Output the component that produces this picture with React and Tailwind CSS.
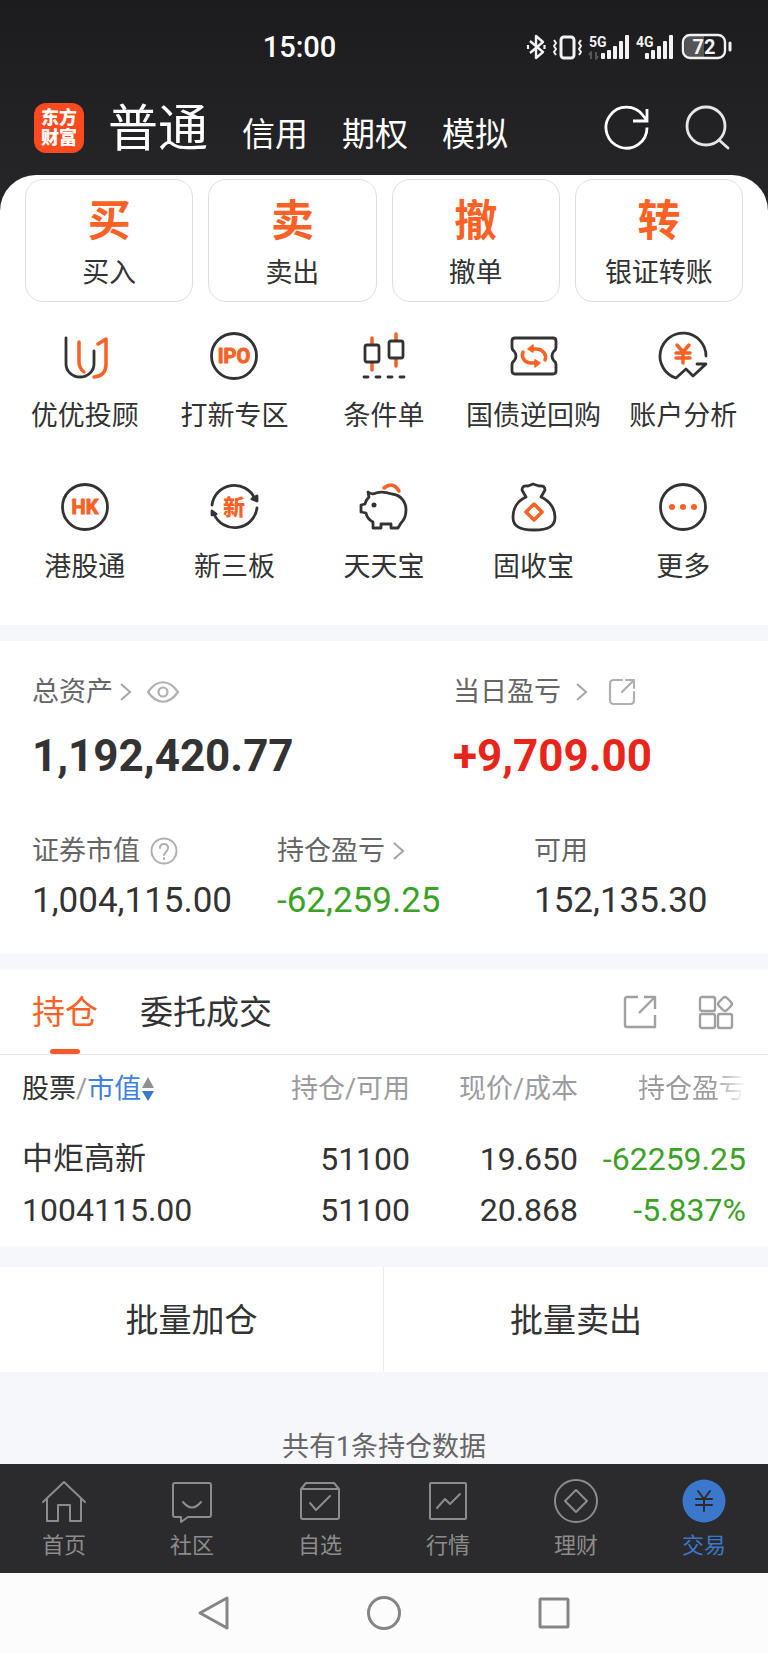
const INK = '#333333';
const ORANGE = '#f96125';

function Svg({ size, className = '', children, ...rest }) {
  return (
    <svg
      width={size}
      height={size}
      viewBox={`0 0 ${size} ${size}`}
      fill="none"
      strokeLinecap="round"
      strokeLinejoin="round"
      aria-hidden="true"
      className={`shrink-0 ${className}`}
      {...rest}
    >
      {children}
    </svg>
  );
}

function Chevron() {
  return (
    <svg width="12" height="20" viewBox="0 0 12 20" fill="none" stroke="#a5a5a5" strokeWidth="2" aria-hidden="true">
      <path d="M1 2l9 8-9 8" />
    </svg>
  );
}

function StatusIcons() {
  return (
    <svg width="208" height="28" viewBox="0 0 208 28" fill="none" stroke="#f2f2f2" strokeLinejoin="round" aria-hidden="true">
      <path d="M4 8l13 11-7 6V3l7 6L4 20" strokeWidth="2.4" />
      <path d="M2 12v4M18.500 12v4" strokeWidth="2.200" />
      <rect x="35" y="4" width="13" height="21" rx="3" strokeWidth="3" />
      <path d="M28 7l2 3-2 3 2 3-2 3 2 3M55 7l-2 3 2 3-2 3 2 3-2 3" strokeWidth="2" />
      <g stroke="none" fill="#f2f2f2" fontFamily="Roboto, sans-serif" fontWeight="700">
        <text x="63" y="14" fontSize="14">5G</text>
        <text x="110" y="14" fontSize="14">4G</text>
        <rect x="75" y="20" width="4" height="6" rx="1" />
        <rect x="81" y="17" width="4" height="9" rx="1" />
        <rect x="87" y="13" width="4" height="13" rx="1" />
        <rect x="93" y="8" width="4" height="18" rx="1" />
        <rect x="99" y="2" width="4" height="24" rx="1" />
        <rect x="119" y="20" width="4" height="6" rx="1" />
        <rect x="125" y="17" width="4" height="9" rx="1" />
        <rect x="131" y="13" width="4" height="13" rx="1" />
        <rect x="137" y="8" width="4" height="18" rx="1" />
        <rect x="143" y="2" width="4" height="24" rx="1" />
      </g>
      <path d="M65 26v-7l-2 3M70 19v7l2-3" stroke="#555" strokeWidth="2" />
      <path d="M163 3h15v21h-15q-4-1-4-6v-9q0-5 4-6z" fill="#555" stroke="none" />
      <rect x="157" y="2" width="42" height="23" rx="7" strokeWidth="2.400" />
      <path d="M204 10v7" strokeWidth="3" strokeLinecap="round" />
      <text x="178" y="21" textAnchor="middle" fontSize="20" fontWeight="700" fontFamily="Roboto, sans-serif" fill="#f2f2f2" stroke="none">
        72
      </text>
    </svg>
  );
}

const trades = [
  ['买', '买入'],
  ['卖', '卖出'],
  ['撤', '撤单'],
  ['转', '银证转账'],
];

const textProps = {
  textAnchor: 'middle',
  fill: ORANGE,
  stroke: 'none',
  fontWeight: 700,
  fontFamily: 'Roboto, "Noto Sans CJK SC", sans-serif',
};

const services = [
  {
    label: '优优投顾',
    icon: (
      <>
        <path d="M5 6v26a14 13 0 0 0 28 0V19" />
        <g stroke={ORANGE} strokeWidth="3.500">
          <path d="M18 10v20q0 6 5 10" />
          <path d="M37 12l8-5v25q0 12-12 13" />
        </g>
      </>
    ),
  },
  {
    label: '打新专区',
    icon: (
      <>
        <circle cx="24" cy="24" r="22.500" />
        <text x="24" y="31" fontSize="20" {...textProps} stroke={ORANGE} strokeWidth="1">IPO</text>
      </>
    ),
  },
  {
    label: '条件单',
    icon: (
      <>
        <path d="M12 6v6M12 31v7M36 2v6M36 27v7" stroke={ORANGE} strokeWidth="3.500" />
        <rect x="5" y="13" width="14" height="17" rx="2" />
        <rect x="29" y="9" width="14" height="17" rx="2" />
        <path d="M4 45h4M16 45h4M28 45h4M40 45h4" />
      </>
    ),
  },
  {
    label: '国债逆回购',
    icon: (
      <>
        <path d="M5 6h38q3 0 3 3v6q0 3-2 4-4 5 0 10 2 1 2 4v6q0 3-3 3H5q-3 0-3-3v-6q0-3 2-4 4-5 0-10-2-1-2-4V9q0-3 3-3z" />
        <g stroke={ORANGE} strokeWidth="3.500">
          <path d="M22 17h4c7 0 11 6 9 11" />
          <path d="M26 31h-4c-8 0-11-6-9-11" />
          <path d="M18 17l5-4v7zM30 31l-5-3v7z" fill={ORANGE} strokeWidth="1.500" />
        </g>
      </>
    ),
  },
  {
    label: '账户分析',
    icon: (
      <>
        <path d="M47 24A23 23 0 1 0 17 46l10-9 7 7 13-12h-9" />
        <path d="M18 13l6 7 6-7M17 21h14M17 26h14M24 21v10" stroke={ORANGE} strokeWidth="3.500" />
      </>
    ),
  },
  {
    label: '港股通',
    icon: (
      <>
        <circle cx="24" cy="24" r="22.500" />
        <text x="24" y="31" fontSize="20" {...textProps} stroke={ORANGE} strokeWidth="1">HK</text>
      </>
    ),
  },
  {
    label: '新三板',
    icon: (
      <>
        <path d="M2 22a22.500 22.500 0 0 1 43-6M47 25a22.500 22.500 0 0 1-43 6" />
        <path d="M42 16l5-3v5zM2 32v-4l4 3z" fill={INK} />
        <text x="24" y="32" fontSize="22" {...textProps} fontWeight="900">新</text>
      </>
    ),
  },
  {
    label: '天天宝',
    icon: (
      <>
        <path d="M8 9q4 3 8 1 6-2 16 1c9 1 14 8 14 16 0 5-2 10-5 13l-3 5h-7v-4H21v4h-8v-6q-6-3-7-9l-5-1v-7l4-1q1-4 4-7z" />
        <circle cx="14" cy="22" r="2.500" fill={INK} stroke="none" />
        <path d="M24 5q9-7 15 3" stroke={ORANGE} strokeWidth="3.500" />
      </>
    ),
  },
  {
    label: '固收宝',
    icon: (
      <>
        <path d="M16 14L12 7q0-5 6-4l5-2 6 2q6-1 6 4l-4 7c9 4 14 12 14 20 0 9-6 13-21 13S3 43 3 34c0-8 4-16 13-20z" />
        <path d="M24 21l8 8-8 8-8-8z" stroke={ORANGE} strokeWidth="3.500" />
      </>
    ),
  },
  {
    label: '更多',
    icon: (
      <>
        <circle cx="24" cy="24" r="22.500" />
        <g fill={ORANGE} stroke="none">
          <circle cx="13" cy="24" r="3" />
          <circle cx="24" cy="24" r="3" />
          <circle cx="35" cy="24" r="3" />
        </g>
      </>
    ),
  },
];

const navItems = [
  { label: '首页', icon: <path d="M1 23L22 3l21 20M5 20v22h11V26h12v16h11V20" /> },
  {
    label: '社区',
    icon: <path d="M5 4h34q2 0 2 2v30q0 2-2 2H18l-7 5v-5H5q-2 0-2-2V6q0-2 2-2zM13 23q9 11 18 0" />,
  },
  {
    label: '自选',
    icon: <path d="M3 10l5-6h28l5 6v28q0 2-2 2H5q-2 0-2-2zh38M12 24l6 7 14-14" />,
  },
  {
    label: '行情',
    icon: (
      <>
        <rect x="4" y="4" width="36" height="36" rx="1" />
        <path d="M11 29l8-9 5 5 10-10" />
      </>
    ),
  },
  {
    label: '理财',
    icon: (
      <>
        <circle cx="22" cy="22" r="21" />
        <path d="M22 11l11 11-11 11-11-11z" />
      </>
    ),
  },
  {
    label: '交易',
    active: true,
    icon: (
      <>
        <circle cx="22" cy="22" r="21.500" fill="#3b78cc" stroke="none" />
        <path d="M16 12l6 8 6-8M14 20h16M14 26h16M22 20v12" stroke="#2b2b2d" />
      </>
    ),
  },
];

function Header() {
  return (
    <header className="bg-gradient-to-b from-[#1c1c1e] to-[#252426] text-white">
      <div className="relative flex h-[94px] items-center justify-end pr-[34px]">
        <time className="absolute left-[39%] -translate-x-1/2 text-[29px] leading-9 font-medium">15:00</time>
        <StatusIcons />
      </div>
      <div className="flex h-[81px] items-start pr-[38px] pl-[34px]">
        <div className="mt-[9px] grid h-[50px] w-[50px] place-content-center rounded-xl bg-[#ff4a20] text-center text-[18px] leading-5 font-black">
          <span>东方</span>
          <span>财富</span>
        </div>
        <nav className="mt-[3px] ml-6 flex items-baseline gap-[34px] text-[33px]">
          <button className="text-[50px] leading-[64px]">普通</button>
          <button>信用</button>
          <button>期权</button>
          <button>模拟</button>
        </nav>
        <div className="mt-[10px] ml-auto flex gap-[34px]">
          <button aria-label="刷新">
            <Svg size={46} stroke="#fff" strokeWidth="2.800" strokeLinecap="butt">
              <path d="M43 23.500a20.500 20.500 0 1 1-4-12l4 5M43 5v12H29" strokeLinejoin="miter" />
            </Svg>
          </button>
          <button aria-label="搜索">
            <Svg size={46} stroke="#e6e6e6" strokeWidth="2.800">
              <circle cx="22" cy="22" r="19" />
              <path d="M35 36l9 8" />
            </Svg>
          </button>
        </div>
      </div>
    </header>
  );
}

function Assets() {
  return (
    <section className="bg-white pt-[33px] pb-[33px] pl-8 text-[27px] leading-9 text-[#666]">
      <div className="grid grid-cols-[421fr_315fr]">
        <div>
          <div className="flex items-center">
            <button className="flex items-center gap-[7px]">总资产 <Chevron /></button>
            <button className="ml-[15px]" aria-label="显示资产">
              <svg width="32" height="22" viewBox="0 0 32 22" fill="none" stroke="#b0b0b0" strokeWidth="2.200" aria-hidden="true">
                <path d="M1 11C10-2 22-2 31 11 22 24 10 24 1 11z" />
                <circle cx="16" cy="11" r="4.500" />
              </svg>
            </button>
          </div>
          <p className="mt-[22px] text-[44px] leading-[48px] font-bold text-[#333]">1,192,420.77</p>
        </div>
        <div>
          <div className="flex items-center">
            <button className="flex items-center gap-[15px]">当日盈亏 <Chevron /></button>
            <button className="ml-5" aria-label="分享盈亏">
              <Svg size={28} stroke="#b0b0b0" strokeWidth="2.200">
                <path d="M14 2H6q-4 0-4 4v16q0 4 4 4h16q4 0 4-4v-8M14 14L26 2M18 2h8v8" />
              </Svg>
            </button>
          </div>
          <p className="mt-[22px] text-[44px] leading-[48px] font-bold text-[#e8251b]">+9,709.00</p>
        </div>
      </div>
      <div className="mt-[53px] grid grid-cols-[245fr_257fr_234fr]">
        <div>
          <div className="flex items-center gap-[10px]">
            证券市值
            <button aria-label="市值说明">
              <Svg size={28} stroke="#b0b0b0" strokeWidth="2">
                <circle cx="14" cy="14" r="12.500" />
                <path d="M10 11q0-4 4-4t4 4q0 2-2 4t-2 3M14 21v1" />
              </Svg>
            </button>
          </div>
          <p className="mt-3 text-[35px] leading-10 text-[#333]">1,004,115.00</p>
        </div>
        <div>
          <button className="flex items-center gap-2">持仓盈亏 <Chevron /></button>
          <p className="mt-3 text-[35px] leading-10 text-[#3ba226]">-62,259.25</p>
        </div>
        <div>
          <div>可用</div>
          <p className="mt-3 text-[35px] leading-10 text-[#333]">152,135.30</p>
        </div>
      </div>
    </section>
  );
}

function Holdings() {
  return (
    <section className="bg-white text-[#333]">
      <div className="flex h-[85px] items-stretch border-b border-[#e8e8e8] pr-[34px] pl-8 text-[33px]">
        <button className="relative pt-[2px] text-[#f96125]">
          持仓
          <span className="absolute bottom-0 left-1/2 h-[5px] w-[30px] -translate-x-1/2 rounded-full bg-[#f55a2c]" />
        </button>
        <button className="ml-[42px] pt-[2px]">委托成交</button>
        <div className="ml-auto flex items-center gap-10">
          <button aria-label="分享持仓">
            <Svg size={36} stroke="#a0a0a3" strokeWidth="2.400" strokeLinecap="butt">
              <path d="M16 3H5q-2 0-2 2v26q0 2 2 2h28V21M17 19L32 4M22 3h11v12" />
            </Svg>
          </button>
          <button aria-label="视图切换">
            <Svg size={36} stroke="#a0a0a3" strokeWidth="2.400">
              <rect x="2" y="3" width="15" height="14" rx="2" />
              <rect x="2" y="20" width="15" height="14" rx="2" />
              <rect x="20" y="20" width="14" height="14" rx="2" />
              <path d="M25 4q2-2 4 0l4 4q2 2 0 4l-4 4q-2 2-4 0l-4-4q-2-2 0-4z" />
            </Svg>
          </button>
        </div>
      </div>
      <div className="px-[22px] pt-4 pb-4">
        <table className="w-full table-fixed text-right text-[32px] leading-10">
          <thead className="text-[27px] leading-9 text-[#9b9b9e]">
            <tr>
              <th className="w-[30.4%] p-0 text-left font-normal">
                <button className="flex items-center">
                  <span className="text-[#333]">股票</span>/<span className="text-[#3f80e0]">市值</span>
                  <svg width="12" height="26" viewBox="0 0 12 26" className="ml-px" aria-hidden="true">
                    <path d="M6 1l6 11H0z" fill="#8f8f8f" />
                    <path d="M6 25l6-10H0z" fill="#3b78cc" />
                  </svg>
                </button>
              </th>
              <th className="p-0 font-normal">持仓/可用</th>
              <th className="p-0 font-normal">现价/成本</th>
              <th className="p-0 font-normal">
                <span className="bg-linear-to-r from-[#9b9b9e] from-70% to-white bg-clip-text text-transparent">持仓盈亏</span>
              </th>
            </tr>
          </thead>
          <tbody>
            <tr>
              <td className="p-0 pt-8 text-left">
                <div className="text-[31px]">中炬高新</div>
                <div className="mt-[11px]">1004115.00</div>
              </td>
              <td className="p-0 pt-8">
                <div>51100</div>
                <div className="mt-[11px]">51100</div>
              </td>
              <td className="p-0 pt-8">
                <div>19.650</div>
                <div className="mt-[11px]">20.868</div>
              </td>
              <td className="p-0 pt-8 text-[#3ba226]">
                <div>-62259.25</div>
                <div className="mt-[11px]">-5.837%</div>
              </td>
            </tr>
          </tbody>
        </table>
      </div>
    </section>
  );
}

function BottomNav() {
  return (
    <nav className="grid grid-cols-6 bg-[#2b2b2d] pt-[15px] pb-[13px] text-[22px] leading-7">
      {navItems.map(({ label, icon, active }) => (
        <a key={label} href="#" className={`flex flex-col items-center gap-[9px] ${active ? 'text-[#3b78cc]' : 'text-[#8c8c8c]'}`}>
          <Svg size={44} stroke="currentColor" strokeWidth="2">{icon}</Svg>
          {label}
        </a>
      ))}
    </nav>
  );
}

export default function App() {
  return (
    <div className="bg-[#f6f7fa] font-[Roboto,'Noto_Sans_CJK_SC',sans-serif]">
      <Header />
      <div className="bg-[#252426]">
        <section className="rounded-t-[36px] bg-white pt-1 pb-10 text-[27px] leading-9 text-[#333]">
          <div className="grid grid-cols-4 gap-[15px] px-[25px]">
            {trades.map(([mark, label]) => (
              <button key={label} className="rounded-[18px] border border-[#dedede] pt-[17px] pb-[10px]">
                <span className="block text-[43px] leading-[48px] font-bold text-[#f96125]">{mark}</span>
                <span className="mt-[10px] block">{label}</span>
              </button>
            ))}
          </div>
          <div className="mt-[30px] grid grid-cols-5 gap-y-[49px] px-[10px]">
            {services.map(({ label, icon }) => (
              <button key={label} className="flex flex-col items-center gap-[18px] whitespace-nowrap">
                <Svg size={48} stroke={INK} strokeWidth="2.800" className="overflow-visible">{icon}</Svg>
                {label}
              </button>
            ))}
          </div>
        </section>
      </div>
      <main className="mt-4">
        <Assets />
        <div className="mt-4">
          <Holdings />
        </div>
        <div className="mt-[21px] grid grid-cols-2 divide-x divide-[#ececec] bg-white text-[33px] text-[#333]">
          <button className="h-[105px] pt-[2px]">批量加仓</button>
          <button className="h-[105px] pt-[2px]">批量卖出</button>
        </div>
        <p className="pt-[58px] text-center text-[27px] leading-[34px] text-[#666]">共有1条持仓数据</p>
      </main>
      <BottomNav />
      <div className="flex h-20 items-center justify-center gap-[134px] bg-[#fcfcfc]">
        <button aria-label="返回">
          <Svg size={36} stroke="#858585" strokeWidth="3">
            <path d="M31 3v30L4 18z" />
          </Svg>
        </button>
        <button aria-label="主屏幕">
          <Svg size={36} stroke="#858585" strokeWidth="3">
            <circle cx="18" cy="18" r="15.500" />
          </Svg>
        </button>
        <button aria-label="最近任务">
          <Svg size={36} stroke="#858585" strokeWidth="3">
            <rect x="4" y="4" width="28" height="28" rx="1" />
          </Svg>
        </button>
      </div>
    </div>
  );
}
